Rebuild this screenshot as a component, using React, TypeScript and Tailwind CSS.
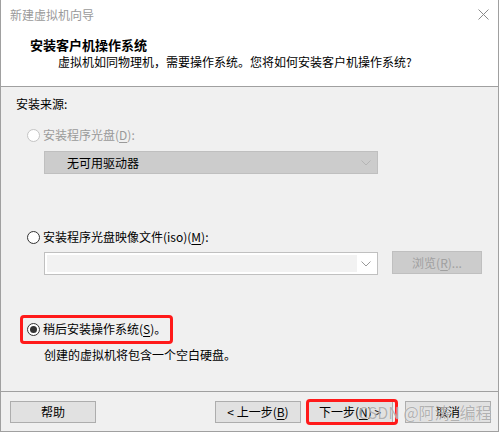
import React from "react";

function Radio({ state }: { state: "disabled" | "off" | "on" }) {
  const border = state === "disabled" ? "border-[#c4c4c4]" : "border-[#333333]";
  return (
    <span
      className={`w-[13px] h-[13px] rounded-full border ${border} bg-white flex items-center justify-center shrink-0`}
    >
      {state === "on" && <span className="w-[7px] h-[7px] rounded-full bg-[#333333]" />}
    </span>
  );
}

function Chevron({ color }: { color: string }) {
  return (
    <svg width="10" height="6" viewBox="0 0 10 6" fill="none">
      <polyline points="0.5,0.5 5,5 9.5,0.5" stroke={color} strokeWidth="1" />
    </svg>
  );
}

function Btn({ children, className = "" }: { children: React.ReactNode; className?: string }) {
  return (
    <div
      className={`w-[86px] h-[22px] bg-[#e1e1e1] border border-[#adadad] flex items-center justify-center text-[12px] leading-[16px] text-black ${className}`}
    >
      {children}
    </div>
  );
}

export default function App() {
  return (
    <div className="w-[500px] h-[433px] bg-white relative font-['Noto_Sans_CJK_SC',sans-serif] text-[12px] leading-[16px] text-black overflow-hidden">
      <div className="w-[499px] h-[432px] border-l border-r border-b border-[#a0a0a0] flex flex-col bg-[#f0f0f0]">
        {/* Header */}
        <div className="h-[87px] bg-white border-b border-[#a0a0a0] flex flex-col shrink-0">
          <div className="h-[30px] flex items-center justify-between pl-[9px] pr-[9px]">
            <span className="text-[#9a9a9a]">新建虚拟机向导</span>
            <svg width="11" height="11" viewBox="0 0 11 11" className="mt-[-1px]">
              <line x1="0.5" y1="0.5" x2="10.5" y2="10.5" stroke="#8a8a8a" strokeWidth="1" />
              <line x1="10.5" y1="0.5" x2="0.5" y2="10.5" stroke="#8a8a8a" strokeWidth="1" />
            </svg>
          </div>
          <div className="mt-[7px] pl-[29px] font-bold text-[13px] leading-[16px]">安装客户机操作系统</div>
          <div className="mt-[1px] pl-[57px]">虚拟机如同物理机，需要操作系统。您将如何安装客户机操作系统?</div>
        </div>

        {/* Body */}
        <div className="flex-1 flex flex-col">
          <div className="mt-[9px] pl-[15px]">安装来源:</div>

          <div className="mt-[15px] pl-[26px] flex items-center gap-[3px] text-[#9a9a9a]">
            <Radio state="disabled" />
            <span>
              安装程序光盘(<u className="underline-offset-2">D</u>):
            </span>
          </div>

          <div className="mt-[8px] ml-[43px] w-[334px] h-[23px] bg-[#cccccc] border border-[#bfbfbf] flex items-center justify-between pl-[22px] pr-[6px]">
            <span>无可用驱动器</span>
            <Chevron color="#b5b5b5" />
          </div>

          <div className="mt-[55px] pl-[26px] flex items-center gap-[3px]">
            <Radio state="off" />
            <span>
              安装程序光盘映像文件(iso)(<u className="underline-offset-2">M</u>):
            </span>
          </div>

          <div className="mt-[6px] flex items-start">
            <div className="mt-[1px] ml-[43px] w-[334px] h-[23px] bg-white border border-[#c0c0c0] flex items-center p-[2px]">
              <div className="w-[310px] h-full bg-[#f2f2f2]" />
              <div className="flex-1 flex items-center justify-center">
                <Chevron color="#9a9a9a" />
              </div>
            </div>
            <div className="ml-[14px] w-[90px] h-[23px] bg-[#cccccc] border border-[#bfbfbf] flex items-center justify-center text-[#a0a0a0]">
              浏览(<u className="underline-offset-2">R</u>)...
            </div>
          </div>

          <div className="mt-[46px] pl-[26px] flex items-center">
            <div className="relative flex items-center gap-[3px]">
              <Radio state="on" />
              <span>
                稍后安装操作系统(<u className="underline-offset-2">S</u>)。
              </span>
              <span className="absolute left-[-7px] top-[-6px] w-[153px] h-[29px] border-[3px] border-[#ff1a1a] rounded-[4px]" />
            </div>
          </div>

          <div className="mt-[10px] pl-[43px]">创建的虚拟机将包含一个空白硬盘。</div>
        </div>

        {/* Footer */}
        <div className="h-[40px] border-t border-[#a0a0a0] flex items-start pt-[9px] shrink-0">
          <Btn className="ml-[9px]">帮助</Btn>
          <Btn className="ml-[119px]">
            &lt; 上一步(<u className="underline-offset-2">B</u>)
          </Btn>
          <div className="relative ml-[6px]">
            <Btn>
              下一步(<u className="underline-offset-2">N</u>) &gt;
            </Btn>
            <span className="absolute left-[-1px] top-[-2px] w-[92px] h-[26px] border-[3px] border-[#ff1a1a] rounded-[4px]" />
          </div>
          <Btn className="ml-[12px]">取消</Btn>
        </div>
      </div>

      {/* Watermark */}
      <div className="absolute left-[358px] top-[402px] text-[16px] leading-[20px] text-[rgba(130,130,130,0.6)] [text-shadow:0_0_1px_rgba(255,255,255,0.9)] whitespace-nowrap pointer-events-none">
        CSDN @阿涛_编程
      </div>
    </div>
  );
}
